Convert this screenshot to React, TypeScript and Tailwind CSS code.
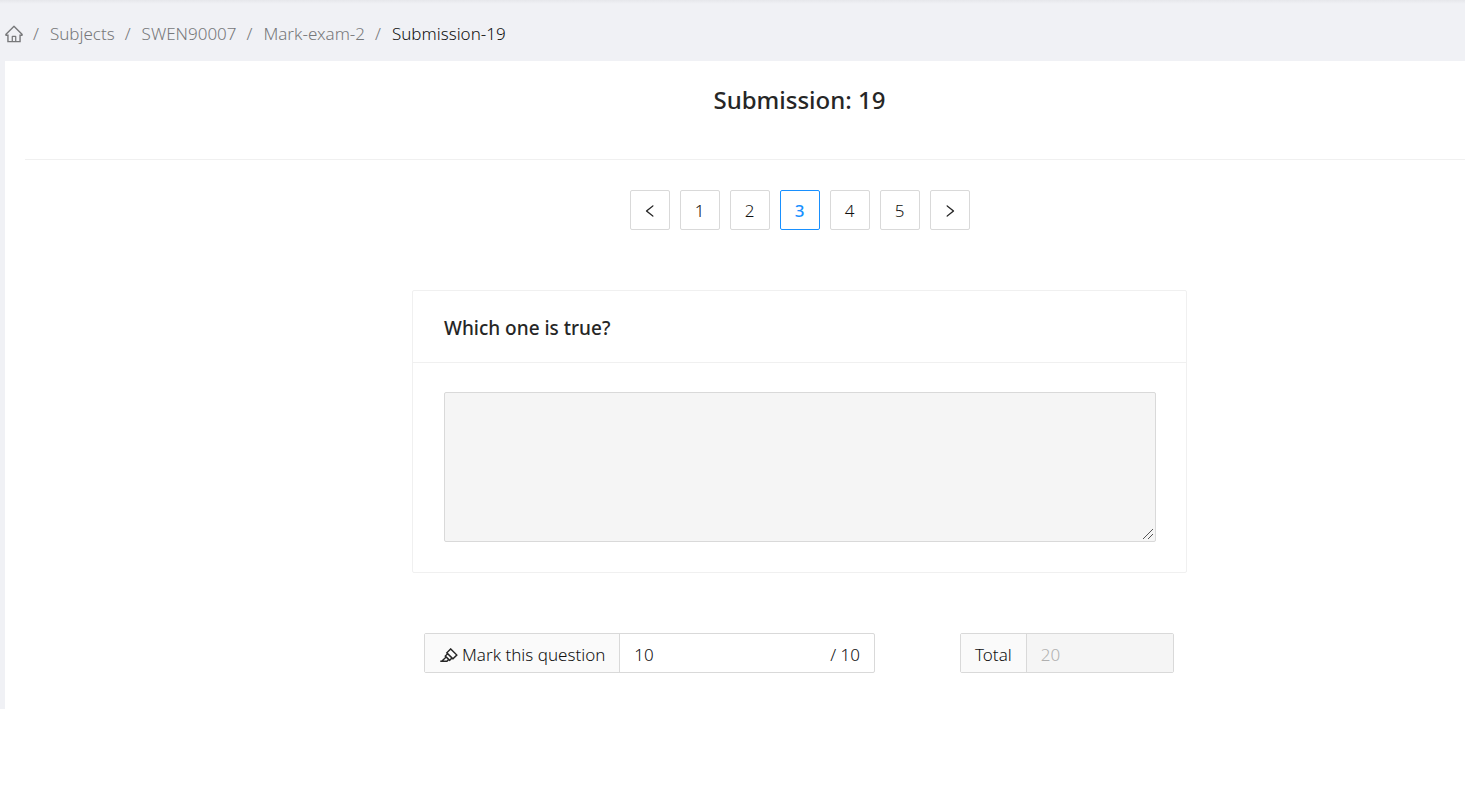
import { Fragment, useState } from "react";
import { AiOutlineHighlight, AiOutlineHome, AiOutlineLeft, AiOutlineRight } from "react-icons/ai";

const crumbs = ["Subjects", "SWEN90007", "Mark-exam-2"];
const pages = [1, 2, 3, 4, 5];

const pageButton = "flex size-10 items-center justify-center rounded-xs border bg-white pt-px";

export default function App() {
  const [page, setPage] = useState(3);
  const [mark, setMark] = useState("10");

  return (
    <div className="bg-white font-['Noto_Sans','Open_Sans',sans-serif] text-[17px] leading-7 font-light text-[#111111]">
      <div className="mr-3 bg-[#f0f1f5] pl-[5px]">
        <div className="-ml-[5px] h-1 bg-linear-to-b from-[#e6e7eb] to-[#f0f1f5]" />
        <nav aria-label="Breadcrumb" className="flex items-center gap-2 pt-4 pb-[13px] text-[#77787a]">
          <a href="#home" aria-label="Home" className="-mx-px">
            <AiOutlineHome className="size-5" />
          </a>
          {crumbs.map((crumb) => (
            <Fragment key={crumb}>
              <span className="pr-[3px] pl-[2px]">/</span>
              <a href={"#" + crumb}>{crumb}</a>
            </Fragment>
          ))}
          <span className="pr-[3px] pl-[2px]">/</span>
          <span aria-current="page" className="text-[#111111]">Submission-19</span>
        </nav>

        <main className="bg-white pb-9 pl-5">
          <header className="border-b border-[#f0f0f0] pt-[19px] pb-10 pl-[109px]">
            <h1 className="text-center text-2xl leading-[39px] font-medium text-[#262626]">Submission: 19</h1>
          </header>

          <div className="flex flex-col items-center pt-[30px] pl-[109px]">
            <nav aria-label="Questions" className="flex gap-[10px]">
              <button type="button" aria-label="Previous question" onClick={() => setPage(Math.max(1, page - 1))} className={pageButton + " border-[#d9d9d9] text-[#262626]"}>
                <AiOutlineLeft className="size-4" />
              </button>
              {pages.map((n) => (
                <button
                  key={n}
                  type="button"
                  onClick={() => setPage(n)}
                  aria-current={n === page ? "page" : undefined}
                  className={pageButton + (n === page ? " border-[#1890ff] font-medium text-[#1890ff]" : " border-[#d9d9d9]")}
                >
                  {n}
                </button>
              ))}
              <button type="button" aria-label="Next question" onClick={() => setPage(Math.min(5, page + 1))} className={pageButton + " border-[#d9d9d9] text-[#262626]"}>
                <AiOutlineRight className="size-4" />
              </button>
            </nav>

            <section className="mt-[60px] w-full max-w-[775px] rounded-xs border border-[#f0f0f0]">
              <h2 id="question" className="border-b border-[#f0f0f0] px-[31px] pt-[23px] pb-5 text-[19px] leading-7 font-medium text-[#262626]">
                Which one is true?
              </h2>
              <div className="pt-[29px] pr-[30px] pb-[30px] pl-[31px]">
                <div className="relative">
                  <textarea
                    aria-labelledby="question"
                    disabled
                    className="block h-[150px] w-full resize-none rounded-xs border border-[#d9d9d9] bg-[#f5f5f5]"
                  />
                  <svg viewBox="0 0 10 10" className="absolute right-[3px] bottom-[3px] size-[10px]" stroke="#555555" fill="none" aria-hidden="true">
                    <path d="M0 10L10 0M5 10L10 5" />
                  </svg>
                </div>
              </div>
            </section>

            <div className="mt-[60px] flex w-full max-w-[751px] gap-[85px]">
              <div className="flex h-10 w-[451px] rounded-xs border border-[#d9d9d9]">
                <label htmlFor="mark" className="flex shrink-0 items-center gap-[3px] border-r border-[#d9d9d9] bg-[#fafafa] px-[14px] pt-[3px]">
                  <AiOutlineHighlight className="size-5 text-[#262626]" />
                  Mark this question
                </label>
                <input id="mark" value={mark} onChange={(e) => setMark(e.target.value)} className="min-w-0 flex-1 px-[14px] pt-[3px] outline-none" />
                <span className="flex items-center pt-[3px] pr-[14px]">/ 10</span>
              </div>
              <div className="flex h-10 w-[214px] rounded-xs border border-[#d9d9d9]">
                <label htmlFor="total" className="flex items-center border-r border-[#d9d9d9] bg-[#fafafa] px-[14px] pt-[3px]">Total</label>
                <input id="total" value="20" disabled className="min-w-0 flex-1 bg-[#f5f5f5] px-[14px] pt-[3px] text-[#b0b0b0]" />
              </div>
            </div>
          </div>
        </main>
      </div>
    </div>
  );
}
